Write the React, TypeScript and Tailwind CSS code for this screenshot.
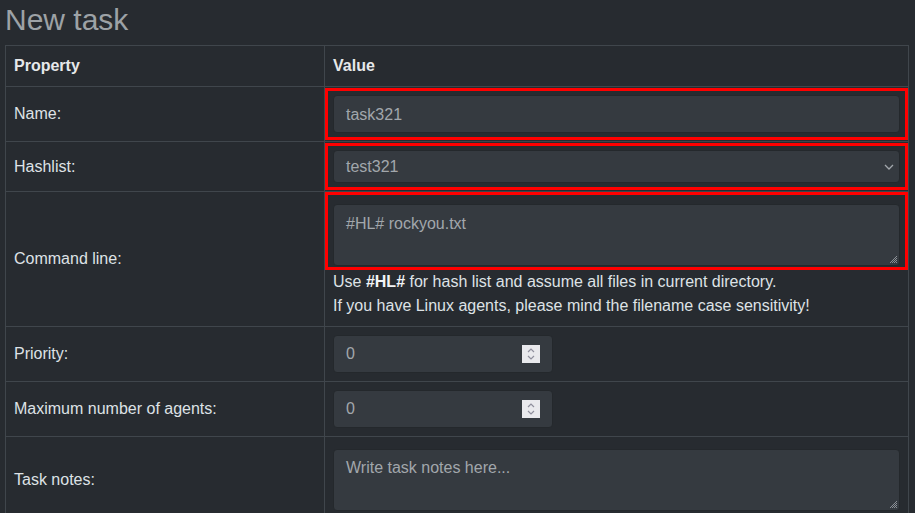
import React from "react";

const Grip = () => (
  <svg className="absolute right-[1px] bottom-[1px]" width="10" height="10" viewBox="0 0 10 10">
    <path d="M9 2 L2 9 M9 4 L4 9 M9 6 L6 9 M9 8 L8 9" stroke="#8a8f95" strokeWidth="1" />
  </svg>
);

const Spinner = () => (
  <div className="absolute right-[12px] top-[9px] w-[18px] h-[18px] bg-[#e9e9ed] flex flex-col items-center justify-center">
    <svg width="10" height="16" viewBox="0 0 10 16">
      <path d="M2 6 L5 3 L8 6" stroke="#8f8f9d" strokeWidth="1.2" fill="none" />
      <path d="M2 10 L5 13 L8 10" stroke="#8f8f9d" strokeWidth="1.2" fill="none" />
    </svg>
  </div>
);

const Red = ({ cls }: { cls: string }) => (
  <div className={"absolute border-[3px] border-[#ff0000] pointer-events-none " + cls} />
);

export default function App() {
  const td = "border border-[#40464c] px-2 py-2 align-middle";
  const field =
    "rounded-[4px] border border-[#24282c] bg-[#353a40] px-3 text-[#a2a7ac]";
  return (
    <div
      className="w-[915px] h-[513px] overflow-hidden bg-[#272b30] text-[#dee2e6] text-[16px] leading-[24px]"
      style={{ fontFamily: '"Liberation Sans", Arial, sans-serif' }}
    >
      <div className="h-[45px] pl-[5px] pt-[3px]">
        <div className="text-[30px] leading-[34px] text-[#9da2a6]">New task</div>
      </div>
      <table className="ml-[5px] w-[903px] table-fixed border-collapse">
        <colgroup>
          <col className="w-[319px]" />
          <col className="w-[584px]" />
        </colgroup>
        <tbody>
          <tr>
            <td className={td + " font-bold text-[#e6e8ea]"}>Property</td>
            <td className={td + " font-bold text-[#e6e8ea]"}>Value</td>
          </tr>
          <tr>
            <td className={td}>Name:</td>
            <td className={td}>
              <div className="relative">
                <div className={field + " h-[38px] flex items-center pt-[1px]"}>task321</div>
                <Red cls="-left-[8px] -right-[8px] -top-[7px] -bottom-[7px]" />
              </div>
            </td>
          </tr>
          <tr>
            <td className={td}>Hashlist:</td>
            <td className={td}>
              <div className="relative">
                <div className={field + " h-[33px] flex items-center justify-between"}>
                  <span>test321</span>
                  <svg width="10" height="6" viewBox="0 0 10 6" className="mr-[-7px]">
                    <path d="M1 1 L5 5 L9 1" stroke="#a2a7ac" strokeWidth="1.3" fill="none" />
                  </svg>
                </div>
                <Red cls="-left-[8px] -right-[8px] -top-[7px] -bottom-[7px]" />
              </div>
            </td>
          </tr>
          <tr>
            <td className={td}>Command line:</td>
            <td className={td}>
              <div className="relative pt-[4px] pb-[3px]">
                <div className={field + " relative h-[62px] pt-[7px]"}>
                  #HL# rockyou.txt
                  <Grip />
                </div>
                <Red cls="-left-[8px] -right-[8px] -top-[8px] -bottom-[1px]" />
              </div>
              <div className="pt-[1px]">
                Use <b className="text-[#f2f4f6]">#HL#</b> for hash list and assume all files in current directory.
                <br />
                If you have Linux agents, please mind the filename case sensitivity!
              </div>
            </td>
          </tr>
          <tr>
            <td className={td}>Priority:</td>
            <td className={td}>
              <div className={field + " relative w-[220px] h-[38px] flex items-center"}>
                0
                <Spinner />
              </div>
            </td>
          </tr>
          <tr>
            <td className={td}>Maximum number of agents:</td>
            <td className={td}>
              <div className={field + " relative w-[220px] h-[38px] flex items-center"}>
                0
                <Spinner />
              </div>
            </td>
          </tr>
          <tr>
            <td className={td}>Task notes:</td>
            <td className={td}>
              <div className="py-[4px]">
                <div className={field + " relative h-[62px] pt-[6px] text-[#7b8086]"}>
                  Write task notes here...
                  <Grip />
                </div>
              </div>
            </td>
          </tr>
        </tbody>
      </table>
    </div>
  );
}
